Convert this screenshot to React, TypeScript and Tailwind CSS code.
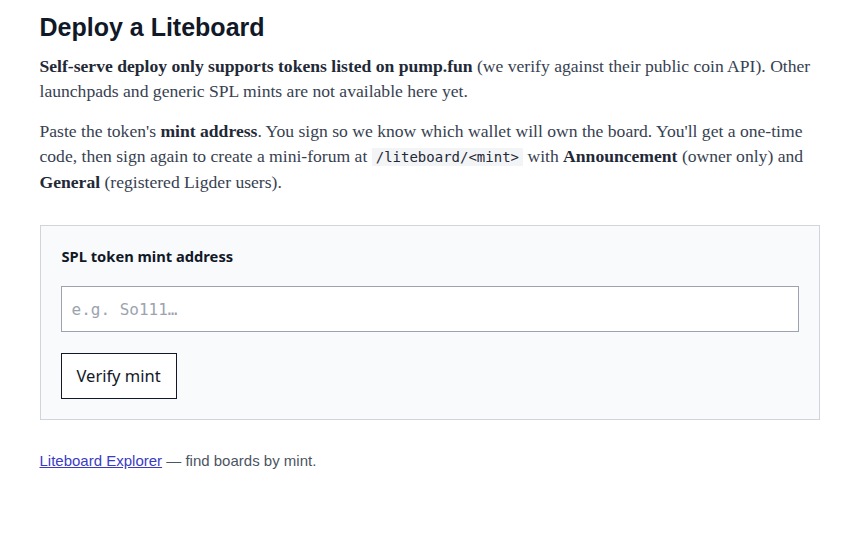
import React from "react";

export default function App() {
  return (
    <div className="min-h-[534px] bg-white">
      <div className="mx-auto w-[780px] pt-[12px]">
        <h1 className="text-[25px] leading-[30px] font-bold text-[#111827] font-['Liberation_Sans',Arial,sans-serif]">
          Deploy a Liteboard
        </h1>
        <div className="font-['Liberation_Serif','Times_New_Roman',serif] text-[17.6px] leading-[25px] text-[#374151]">
          <p className="mt-[12px]">
            <strong className="text-[#1f2937]">Self-serve deploy only supports tokens listed on pump.fun</strong> (we verify against their public coin API). Other launchpads and generic SPL mints are not available here yet.
          </p>
          <p className="mt-[15px]">
            Paste the token's <strong className="text-[#1f2937]">mint address</strong>. You sign so we know which wallet will own the board. You'll get a one-time code, then sign again to create a mini-forum at{" "}
            <code className="bg-[#f3f4f6] px-[4px] py-[1px] text-[14px] font-['DejaVu_Sans_Mono',monospace] text-[#1f2937]">/liteboard/&lt;mint&gt;</code>{" "}
            with <strong className="text-[#1f2937]">Announcement</strong> (owner only) and <strong className="text-[#1f2937]">General</strong> (registered Ligder users).
          </p>
        </div>
        <div className="mt-[30px] border border-[#d1d5db] bg-[#f9fafb] px-[20px] pt-[20px] pb-[20px] font-['Open_Sans',sans-serif]">
          <label className="block pl-[1px] text-[14.7px] leading-[20px] font-bold text-[#111827] font-['Noto_Sans',sans-serif]">
            SPL token mint address
          </label>
          <input
            placeholder="e.g. So111…"
            className="mt-[20px] block h-[46px] w-full border border-[#9ca3af] bg-white px-[10px] text-[16px] font-['DejaVu_Sans_Mono',monospace] text-[#111827] placeholder:text-[#9ca3af] outline-none"
          />
          <button className="mt-[21px] block h-[46px] border border-[#111827] bg-white px-[15px] text-[16.5px] text-[#111827] font-['Noto_Sans',sans-serif]">
            Verify mint
          </button>
        </div>
        <p className="mt-[31px] text-[15px] leading-[20px] text-[#4b5563] font-['Liberation_Sans',Arial,sans-serif]">
          <a href="#" className="text-[#3b3bc4] underline">Liteboard Explorer</a> — find boards by mint.
        </p>
      </div>
    </div>
  );
}
